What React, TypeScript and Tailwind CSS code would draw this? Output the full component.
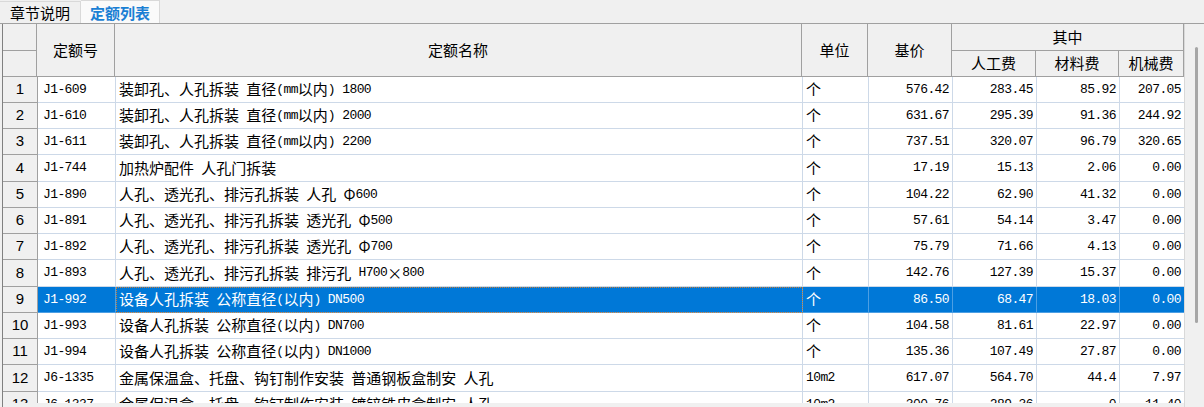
import React from "react";

type Row = {
  code: string;
  name: string;
  unit: string;
  base: string;
  labor: string;
  material: string;
  machine: string;
};

const rows: Row[] = [
  { code: "J1-609", name: "装卸孔、人孔拆装 直径(mm以内) 1800", unit: "个", base: "576.42", labor: "283.45", material: "85.92", machine: "207.05" },
  { code: "J1-610", name: "装卸孔、人孔拆装 直径(mm以内) 2000", unit: "个", base: "631.67", labor: "295.39", material: "91.36", machine: "244.92" },
  { code: "J1-611", name: "装卸孔、人孔拆装 直径(mm以内) 2200", unit: "个", base: "737.51", labor: "320.07", material: "96.79", machine: "320.65" },
  { code: "J1-744", name: "加热炉配件 人孔门拆装", unit: "个", base: "17.19", labor: "15.13", material: "2.06", machine: "0.00" },
  { code: "J1-890", name: "人孔、透光孔、排污孔拆装 人孔 Φ600", unit: "个", base: "104.22", labor: "62.90", material: "41.32", machine: "0.00" },
  { code: "J1-891", name: "人孔、透光孔、排污孔拆装 透光孔 Φ500", unit: "个", base: "57.61", labor: "54.14", material: "3.47", machine: "0.00" },
  { code: "J1-892", name: "人孔、透光孔、排污孔拆装 透光孔 Φ700", unit: "个", base: "75.79", labor: "71.66", material: "4.13", machine: "0.00" },
  { code: "J1-893", name: "人孔、透光孔、排污孔拆装 排污孔 H700×800", unit: "个", base: "142.76", labor: "127.39", material: "15.37", machine: "0.00" },
  { code: "J1-992", name: "设备人孔拆装 公称直径(以内) DN500", unit: "个", base: "86.50", labor: "68.47", material: "18.03", machine: "0.00" },
  { code: "J1-993", name: "设备人孔拆装 公称直径(以内) DN700", unit: "个", base: "104.58", labor: "81.61", material: "22.97", machine: "0.00" },
  { code: "J1-994", name: "设备人孔拆装 公称直径(以内) DN1000", unit: "个", base: "135.36", labor: "107.49", material: "27.87", machine: "0.00" },
  { code: "J6-1335", name: "金属保温盒、托盘、钩钉制作安装 普通钢板盒制安 人孔", unit: "10m2", base: "617.07", labor: "564.70", material: "44.4", machine: "7.97" },
  { code: "J6-1337", name: "金属保温盒、托盘、钩钉制作安装 镀锌铁皮盒制安 人孔", unit: "10m2", base: "300.76", labor: "289.36", material: "0", machine: "11.40" },
];

const SELECTED = 8;

const cols = "grid grid-cols-[35px_78px_687px_66px_84px_84px_83px_65px]";
const mono = "font-['Liberation_Mono',monospace] text-[13px] tracking-[-0.6px]";

// ascii runs get the mono face, the rest stays in the CJK sans
const Mixed = ({ text }: { text: string }) => (
  <>
    {text.split(/([\x20-\x7E]+)/).map((part, i) =>
      /^[\x20-\x7E]+$/.test(part) ? (
        <span key={i} className={`${mono} whitespace-pre`}>
          {part}
        </span>
      ) : (
        <span key={i}>{part}</span>
      )
    )}
  </>
);

const HeadCell = ({ children, className = "" }: { children?: React.ReactNode; className?: string }) => (
  <div
    className={`flex items-center justify-center border-r border-b border-[#a0a0a0] bg-[#f0f0f0] text-[15px] text-black ${className}`}
  >
    {children}
  </div>
);

export default function App() {
  return (
    <div className="w-[1204px] h-[407px] overflow-hidden bg-[#f0f0f0] flex flex-col font-['Noto_Sans_CJK_SC',sans-serif] select-none">
      {/* Tabs */}
      <div className="h-[24px] shrink-0 flex items-end border-b border-[#a0a0a0] bg-[#f0f0f0]">
        <div className="h-[22px] w-[81px] flex items-center justify-center border-t border-r border-[#d9d9d9] text-[15px] text-black leading-none">
          章节说明
        </div>
        <div className="h-[23px] w-[79px] flex items-center justify-center border-t border-r border-[#d9d9d9] bg-[#fafafa] text-[15px] font-bold text-[#1a7fd4] leading-none">
          定额列表
        </div>
      </div>

      {/* Grid + vertical scroll */}
      <div className="flex flex-1 min-h-0">
        <div className="ml-[2px] w-[1182px] border-l border-[#808080] flex flex-col min-h-0 overflow-hidden bg-white">
          {/* Header */}
          <div className={`${cols} grid-rows-[27px_26px] shrink-0 -ml-px`}>
            <HeadCell className="border-l border-[#a0a0a0]" />
            <HeadCell className="row-span-2">定额号</HeadCell>
            <HeadCell className="row-span-2">定额名称</HeadCell>
            <HeadCell className="row-span-2">单位</HeadCell>
            <HeadCell className="row-span-2">基价</HeadCell>
            <HeadCell className="col-span-3">其中</HeadCell>
            <HeadCell className="border-l border-[#a0a0a0]" />
            <HeadCell>人工费</HeadCell>
            <HeadCell>材料费</HeadCell>
            <HeadCell>机械费</HeadCell>
          </div>

          {/* Body */}
          <div className="flex-1 min-h-0 overflow-hidden">
            {rows.map((r, i) => {
              const sel = i === SELECTED;
              const h = i % 4 === 3 ? "h-[27px]" : "h-[26px]";
              const cell = sel
                ? "bg-[#0078d7] text-white border-r border-b border-[#4d9fe3]"
                : "bg-white text-black border-r border-b border-[#cdd9e8]";
              const num = `justify-end pr-[3px] ${mono}`;
              return (
                <div key={r.code} className={`${cols} ${h}`}>
                  <div className="flex items-center justify-center bg-[#f0f0f0] border-r border-b border-[#a0a0a0] text-[15px] text-black font-['Liberation_Sans',sans-serif]">
                    {i + 1}
                  </div>
                  <div className={`flex items-center pl-[5px] ${mono} ${cell}`}>{r.code}</div>
                  <div
                    className={`flex items-center pl-[3px] text-[15px] whitespace-nowrap overflow-hidden ${cell} ${
                      sel ? "outline outline-1 outline-dotted outline-[#c8803c] -outline-offset-1" : ""
                    }`}
                  >
                    <Mixed text={r.name} />
                  </div>
                  <div className={`flex items-center pl-[3px] text-[15px] ${cell}`}>
                    <Mixed text={r.unit} />
                  </div>
                  <div className={`flex items-center ${num} ${cell}`}>{r.base}</div>
                  <div className={`flex items-center ${num} ${cell}`}>{r.labor}</div>
                  <div className={`flex items-center ${num} ${cell}`}>{r.material}</div>
                  <div className={`flex items-center ${num} ${cell}`}>{r.machine}</div>
                </div>
              );
            })}
          </div>
          <div className="h-[4px] shrink-0 bg-[#f0f0f0]" />
        </div>

        {/* Scrollbar */}
        <div className="w-[20px] shrink-0 bg-[#f0f0f0] border-l border-[#d9d9d9] pt-[23px] pl-[10px]">
          <div className="w-[3px] h-[276px] rounded-full bg-[#a6a6a6]" />
        </div>
      </div>
    </div>
  );
}
